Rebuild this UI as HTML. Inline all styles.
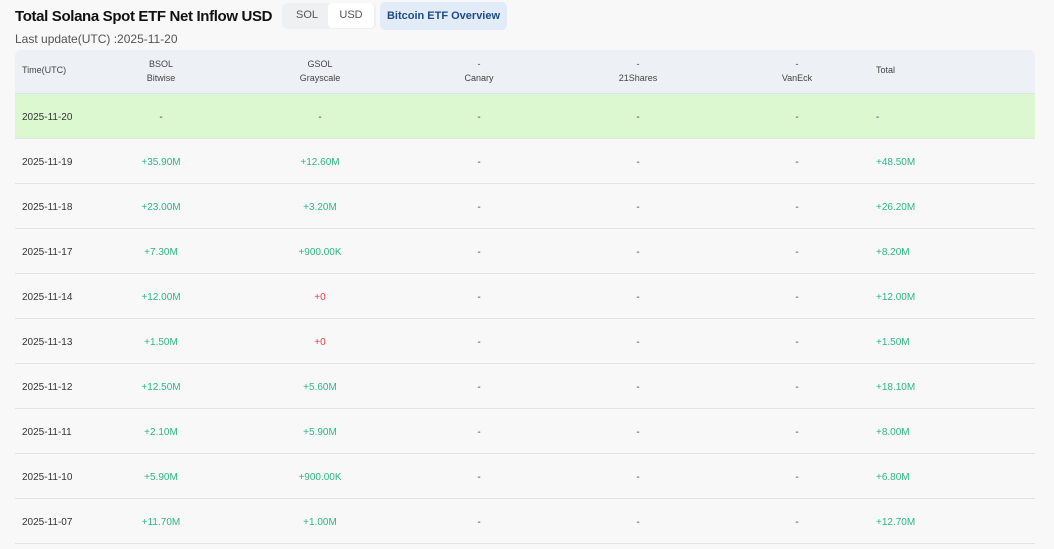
<!DOCTYPE html>
<html><head><style>
body{margin:0;width:1054px;height:549px;background:#f8f8f9;font-family:"Liberation Sans",sans-serif;position:relative;overflow:hidden;color:#222}
.t{position:absolute;left:15px;top:8px;font-size:15px;font-weight:bold;color:#111;letter-spacing:-0.35px;white-space:nowrap}
.sub{position:absolute;left:15px;top:32px;font-size:12px;color:#555}
.tog{position:absolute;left:282px;top:3px;width:94px;height:26px;background:#eef0f2;border-radius:5px}
.tog span{position:absolute;top:0;line-height:25px;font-size:11px;color:#555}
.usd{left:46px;width:46px;height:25px;background:#fff;border-radius:4px;text-align:center}
.btn{position:absolute;left:380px;top:2px;width:127px;height:28px;background:#e1ecf8;border-radius:5px;color:#1e4a86;font-size:11px;font-weight:bold;line-height:28px;text-align:center}
.hd{position:absolute;left:15px;top:50px;width:1020px;height:43px;background:#edf1f5;border-radius:6px 6px 0 0;border-bottom:1px solid #e0e3e6}
.row{position:absolute;left:15px;width:1020px;height:44px;border-bottom:1px solid #e3e3e3}
.c{position:absolute;top:2px;font-size:10px;text-align:center;width:120px;margin-left:-60px;line-height:44px;color:#444}
.h{position:absolute;font-size:9px;color:#444;text-align:center;width:120px;margin-left:-60px;line-height:14px}
.g{color:#2db784}.r{color:#ef3b4f}
</style></head><body>
<div class="t">Total Solana Spot ETF Net Inflow USD</div>
<div class="sub">Last update(UTC) :2025-11-20</div>
<div class="tog"><span style="left:14px">SOL</span><span class="usd">USD</span></div>
<div class="btn">Bitcoin ETF Overview</div>
<div class="hd">
<div style="position:absolute;left:7px;top:15px;font-size:9px;color:#444">Time(UTC)</div>
<div class="h" style="left:146px;top:7px">BSOL<br>Bitwise</div>
<div class="h" style="left:305px;top:7px">GSOL<br>Grayscale</div>
<div class="h" style="left:464px;top:7px">-<br>Canary</div>
<div class="h" style="left:623px;top:7px">-<br>21Shares</div>
<div class="h" style="left:782px;top:7px">-<br>VanEck</div>
<div style="position:absolute;left:861px;top:15px;font-size:9px;color:#444">Total</div>
</div>
<div id="rows"></div>
<script>
var d=[["2025-11-20","-","-","-"],["2025-11-19","+35.90M","+12.60M","+48.50M"],["2025-11-18","+23.00M","+3.20M","+26.20M"],["2025-11-17","+7.30M","+900.00K","+8.20M"],["2025-11-14","+12.00M","+0","+12.00M"],["2025-11-13","+1.50M","+0","+1.50M"],["2025-11-12","+12.50M","+5.60M","+18.10M"],["2025-11-11","+2.10M","+5.90M","+8.00M"],["2025-11-10","+5.90M","+900.00K","+6.80M"],["2025-11-07","+11.70M","+1.00M","+12.70M"]];
var h="";
d.forEach(function(r,i){
var cl=function(v){return v=="-"?"":(v=="+0"?"r":"g")};
h+='<div class="row" style="top:'+(94+i*45)+'px;'+(i==0?'background:#dbf8d1':'')+'">'+
'<div class="c" style="left:67px;text-align:left;color:#333">'+r[0]+'</div>'+
'<div class="c '+cl(r[1])+'" style="left:146px">'+r[1]+'</div>'+
'<div class="c '+cl(r[2])+'" style="left:305px">'+r[2]+'</div>'+
'<div class="c" style="left:464px">-</div><div class="c" style="left:623px">-</div><div class="c" style="left:782px">-</div>'+
'<div class="c '+cl(r[3])+'" style="left:921px;text-align:left">'+r[3]+'</div></div>';});
document.getElementById("rows").innerHTML=h;
</script>
</body></html>
